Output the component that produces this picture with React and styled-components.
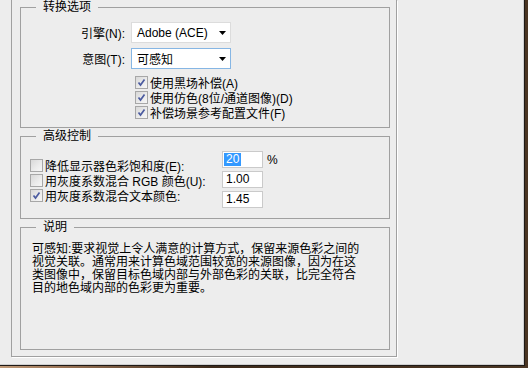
import React from "react";
import styled, { createGlobalStyle } from "styled-components";

const GlobalStyle = createGlobalStyle`
  html, body {
    margin: 0;
    padding: 0;
  }
  body {
    width: 528px;
    height: 368px;
    overflow: hidden;
    font-family: "Liberation Sans", "Noto Sans CJK SC", sans-serif;
    font-size: 12px;
    color: #000;
  }
`;

const Frame = styled.div`
  width: 528px;
  height: 368px;
  display: flex;
  flex-direction: column;
  background: #4a3522;
`;

const Dialog = styled.div`
  width: 525px;
  height: 366px;
  box-sizing: border-box;
  padding-left: 11px;
  background: #ededed;
  border-right: 1px solid #1f1a16;
  border-bottom: 1px solid #1f1a16;
  box-shadow: inset -1px -1px 0 #cfcfcf;
`;

const BottomEdge = styled.div`
  height: 2px;
  background: linear-gradient(to right, #c09a78 0%, #9a7456 12%, #3e2b1b 40%, #4c3724 100%);
`;

const OptionsPanel = styled.div`
  width: 386px;
  height: 357px;
  box-sizing: border-box;
  border: 1px solid #a0a0a0;
  border-top: none;
  padding: 0 6px 6px 8px;
  box-shadow: 1px 1px 0 #fff;
`;

const GroupBox = styled.fieldset`
  margin: 0;
  padding: 0;
  min-width: 0;
  height: ${p => p.$height}px;
  box-sizing: border-box;
  border: 1px solid #a0a0a0;

  & + & {
    margin-top: 1px;
  }
`;

const GroupTitle = styled.legend`
  margin-left: 15px;
  padding: 0 7px;
  line-height: 14px;
  font-size: 12px;
`;

const ConvertBody = styled.div`
  padding-top: 8px;
`;

const FieldRow = styled.div`
  display: grid;
  grid-template-columns: 104px 100px;
  column-gap: 6px;
  align-items: center;

  & + & {
    margin-top: 5px;
  }
`;

const FieldLabel = styled.span`
  text-align: right;
  white-space: nowrap;
`;

const SelectBox = styled.div`
  height: 21px;
  box-sizing: border-box;
  display: flex;
  align-items: center;
  justify-content: space-between;
  padding: 0 4px 0 5px;
  background: #fff;
  border: 1px solid ${p => (p.$focused ? "#86b6e4" : "#dcdcdc")};
  white-space: nowrap;
`;

const CheckList = styled.div`
  margin: 6px 0 0 114px;
`;

const CheckRow = styled.label`
  display: flex;
  align-items: center;
  gap: 2px;
  height: 15px;
  white-space: nowrap;
`;

const CheckBox = styled.span`
  width: 13px;
  height: 13px;
  flex: none;
  box-sizing: border-box;
  border: 1px solid #a7a7a7;
  background: linear-gradient(135deg, #d8d8d8 0%, #ececec 60%, #f6f6f6 100%);
  display: flex;
  align-items: center;
  justify-content: center;
`;

const AdvancedBody = styled.div`
  display: flex;
  padding-left: 9px;
`;

const AdvancedChecks = styled.div`
  width: 192px;
  padding-top: 15px;
`;

const AdvancedInputs = styled.div`
  display: flex;
  flex-direction: column;
  gap: 3px;
  padding-top: 8px;
`;

const InputRow = styled.div`
  display: flex;
  align-items: center;
  gap: 4px;
`;

const TextInput = styled.div`
  width: 41px;
  height: 17px;
  box-sizing: border-box;
  padding-left: 3px;
  background: #fff;
  border: 1px solid #cacaca;
  line-height: 15px;
  white-space: nowrap;
`;

const Selected = styled.span`
  display: inline-block;
  margin-left: -2px;
  padding: 0 2px 0 2px;
  line-height: 13px;
  background: #3399ff;
  color: #fff;
`;

const DescBody = styled.div`
  padding: 9px 0 0 11px;
  line-height: 13px;
`;

const DescLine = styled.div`
  white-space: nowrap;
`;

const Arrow = () => (
  <svg width="7" height="4" viewBox="0 0 7 4">
    <polygon points="0,0 7,0 3.5,4" fill="#000" />
  </svg>
);

const Check = ({ checked }) => (
  <CheckBox>
    {checked && (
      <svg width="9" height="9" viewBox="0 0 9 9">
        <polyline points="1.5,4.5 3.5,7 7.5,1.5" fill="none" stroke="#4b5ba0" strokeWidth="1.7" />
      </svg>
    )}
  </CheckBox>
);

const convertChecks = [
  "使用黑场补偿(A)",
  "使用仿色(8位/通道图像)(D)",
  "补偿场景参考配置文件(F)",
];

const advancedChecks = [
  { text: "降低显示器色彩饱和度(E):", checked: false },
  { text: "用灰度系数混合 RGB 颜色(U):", checked: false },
  { text: "用灰度系数混合文本颜色:", checked: true },
];

const description = [
  "可感知:要求视觉上令人满意的计算方式，保留来源色彩之间的",
  "视觉关联。通常用来计算色域范围较宽的来源图像，因为在这",
  "类图像中，保留目标色域内部与外部色彩的关联，比完全符合",
  "目的地色域内部的色彩更为重要。",
];

const App = () => (
  <>
    <GlobalStyle />
    <Frame>
      <Dialog>
        <OptionsPanel>
          <GroupBox $height={128}>
            <GroupTitle>转换选项</GroupTitle>
            <ConvertBody>
              <FieldRow>
                <FieldLabel>引擎(N):</FieldLabel>
                <SelectBox>
                  Adobe (ACE)
                  <Arrow />
                </SelectBox>
              </FieldRow>
              <FieldRow>
                <FieldLabel>意图(T):</FieldLabel>
                <SelectBox $focused>
                  可感知
                  <Arrow />
                </SelectBox>
              </FieldRow>
              <CheckList>
                {convertChecks.map(text => (
                  <CheckRow key={text}>
                    <Check checked />
                    {text}
                  </CheckRow>
                ))}
              </CheckList>
            </ConvertBody>
          </GroupBox>

          <GroupBox $height={90}>
            <GroupTitle>高级控制</GroupTitle>
            <AdvancedBody>
              <AdvancedChecks>
                {advancedChecks.map(item => (
                  <CheckRow key={item.text}>
                    <Check checked={item.checked} />
                    {item.text}
                  </CheckRow>
                ))}
              </AdvancedChecks>
              <AdvancedInputs>
                <InputRow>
                  <TextInput>
                    <Selected>20</Selected>
                  </TextInput>
                  %
                </InputRow>
                <InputRow>
                  <TextInput>1.00</TextInput>
                </InputRow>
                <InputRow>
                  <TextInput>1.45</TextInput>
                </InputRow>
              </AdvancedInputs>
            </AdvancedBody>
          </GroupBox>

          <GroupBox $height={130}>
            <GroupTitle>说明</GroupTitle>
            <DescBody>
              {description.map(line => (
                <DescLine key={line}>{line}</DescLine>
              ))}
            </DescBody>
          </GroupBox>
        </OptionsPanel>
      </Dialog>
      <BottomEdge />
    </Frame>
  </>
);

export default App;
